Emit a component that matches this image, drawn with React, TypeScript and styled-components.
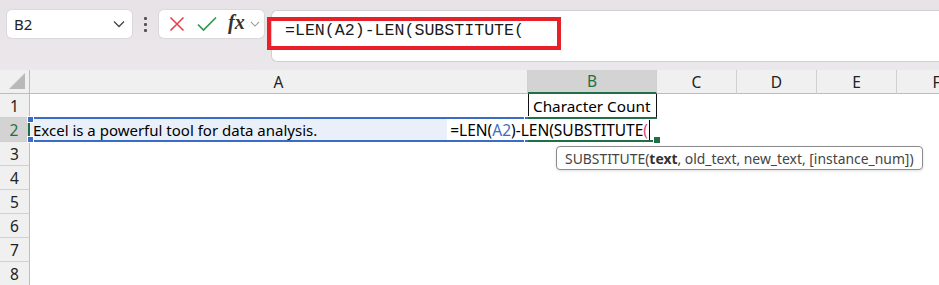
import React from 'react'
import styled, { createGlobalStyle } from 'styled-components'

const GlobalStyle = createGlobalStyle`
  html, body {
    margin: 0;
    padding: 0;
    background: #ffffff;
    overflow: hidden;
  }
  body {
    font-family: "Noto Sans", "Open Sans", sans-serif;
  }
`

const COLUMNS = ['A', 'B', 'C', 'D', 'E', 'F']
const ROWS = [1, 2, 3, 4, 5, 6, 7, 8]

export default function App () {
  return (
    <>
      <GlobalStyle />
      <StyledPage>
        <StyledTopBar>
          <StyledNameBox>
            <span>B2</span>
            <Chevron size={12} color="#444" />
          </StyledNameBox>
          <StyledGrip>
            <i /><i /><i />
          </StyledGrip>
          <StyledFxBox>
            <StyledIconButton>
              <svg width="16" height="16" viewBox="0 0 16 16">
                <path d="M1.5 1.5 L14.5 14.5 M14.5 1.5 L1.5 14.5" stroke="#e8414f" strokeWidth="1.6" fill="none" />
              </svg>
            </StyledIconButton>
            <StyledIconButton>
              <svg width="20" height="16" viewBox="0 0 20 16">
                <path d="M1 8.5 L6.5 14 L19 1.5" stroke="#2e9a4f" strokeWidth="1.7" fill="none" />
              </svg>
            </StyledIconButton>
            <StyledFx>fx</StyledFx>
            <Chevron size={10} color="#9a9a9a" />
          </StyledFxBox>
          <StyledFormulaBar>
            <StyledFormulaText>=LEN(A2)-LEN(SUBSTITUTE(</StyledFormulaText>
            <StyledHighlight />
          </StyledFormulaBar>
        </StyledTopBar>

        <StyledSheet>
          <StyledCorner>
            <svg width="18" height="18" viewBox="0 0 18 18">
              <path d="M17 1 L17 17 L1 17 Z" fill="#b9b9b9" />
            </svg>
          </StyledCorner>
          {COLUMNS.map(c => (
            <StyledColHeader key={c} $active={c === 'B'}>{c}</StyledColHeader>
          ))}
          {ROWS.map(r => (
            <React.Fragment key={r}>
              <StyledRowHeader $active={r === 2}>{r}</StyledRowHeader>
              {COLUMNS.map(c => renderCell(c, r))}
            </React.Fragment>
          ))}
        </StyledSheet>

        <StyledTooltip>
          SUBSTITUTE(<b>text</b>, old_text, new_text, [instance_num])
        </StyledTooltip>
      </StyledPage>
    </>
  )
}

function renderCell (col: string, row: number) {
  const key = col + row
  if (key === 'A2') {
    return (
      <StyledRefCell key={key}>
        Excel is a powerful tool for data analysis.
        <StyledHandle $color="#3a6cc6" $left={-3} $top={-3} />
        <StyledHandle $color="#3a6cc6" $right={-3} $top={-3} />
        <StyledHandle $color="#3a6cc6" $left={-3} $bottom={-3} />
        <StyledHandle $color="#3a6cc6" $right={-3} $bottom={-3} />
      </StyledRefCell>
    )
  }
  if (key === 'B1') {
    return <StyledBorderCell key={key}>Character Count</StyledBorderCell>
  }
  if (key === 'B2') {
    return (
      <StyledActiveCell key={key}>
        <StyledEditText>
          =LEN(<StyledRef>A2</StyledRef>)-LEN(SUBSTITUTE<StyledParen>(</StyledParen>
          <StyledCaret />
        </StyledEditText>
        <StyledHandle $color="#1f7145" $right={-4} $bottom={-4} $size={6} />
      </StyledActiveCell>
    )
  }
  return <StyledCell key={key} />
}

function Chevron ({ size, color }: { size: number, color: string }) {
  return (
    <svg width={size} height={size} viewBox="0 0 12 12">
      <path d="M1 3.5 L6 8.5 L11 3.5" stroke={color} strokeWidth="1.3" fill="none" />
    </svg>
  )
}

const StyledPage = styled.div`
  position: relative;
  width: 939px;
  height: 285px;
  overflow: hidden;
`

const StyledTopBar = styled.div`
  display: flex;
  align-items: flex-start;
  height: 70px;
  box-sizing: border-box;
  padding: 10px 0 0 7px;
  background: linear-gradient(#e6e2e6, #ebe8eb);
`

const StyledNameBox = styled.div`
  display: flex;
  align-items: center;
  justify-content: space-between;
  box-sizing: border-box;
  width: 125px;
  height: 28px;
  padding: 0 7px 0 7px;
  background: #ffffff;
  border-radius: 5px;
  box-shadow: 0 0 0 1px #dcd9dc;
  font-family: "Noto Sans", sans-serif;
  font-size: 15px;
  color: #222;
`

const StyledGrip = styled.div`
  display: flex;
  flex-direction: column;
  align-items: center;
  justify-content: center;
  gap: 3px;
  width: 27px;
  height: 28px;

  i {
    display: block;
    width: 3px;
    height: 3px;
    border-radius: 1px;
    background: #555;
  }
`

const StyledFxBox = styled.div`
  display: flex;
  align-items: center;
  box-sizing: border-box;
  width: 105px;
  height: 28px;
  padding: 0 3px 0 4px;
  gap: 2px;
  background: #ffffff;
  border-radius: 5px;
  box-shadow: 0 0 0 1px #dcd9dc;
`

const StyledIconButton = styled.span`
  display: flex;
  align-items: center;
  justify-content: center;
  width: 28px;
  height: 24px;
`

const StyledFx = styled.span`
  font-family: "Liberation Serif", serif;
  font-style: italic;
  font-weight: bold;
  font-size: 20px;
  color: #333;
  margin: -3px 3px 0 5px;
`

const StyledFormulaBar = styled.div`
  position: relative;
  flex: 1;
  height: 52px;
  margin-left: 7px;
  box-sizing: border-box;
  padding: 8px 0 0 13px;
  background: #ffffff;
  border: 1px solid #d2cfd2;
  border-right: none;
  border-radius: 6px 0 0 6px;
`

const StyledFormulaText = styled.div`
  font-family: "Liberation Mono", "DejaVu Sans Mono", monospace;
  font-size: 16.6px;
  line-height: 24px;
  color: #1a1a1a;
`

const StyledHighlight = styled.div`
  position: absolute;
  left: -5px;
  top: 6px;
  width: 294px;
  height: 33px;
  box-sizing: border-box;
  border: 4px solid #e8202a;
`

const StyledSheet = styled.div`
  display: grid;
  grid-template-columns: 30px 498px 129px 80px 80px 80px 80px;
  grid-auto-rows: 24px;
  font-family: "Noto Sans", sans-serif;
  font-size: 15px;
  color: #000;
`

const StyledCorner = styled.div`
  display: flex;
  align-items: flex-end;
  justify-content: flex-end;
  padding: 0 3px 3px 0;
  box-sizing: border-box;
  background: #f0f0f0;
  border-right: 1px solid #bdbdbd;
  border-bottom: 1px solid #bdbdbd;
`

const StyledColHeader = styled.div<{ $active?: boolean }>`
  display: flex;
  align-items: center;
  justify-content: center;
  box-sizing: border-box;
  background: ${({ $active }) => $active ? '#d3d3d3' : '#f0f0f0'};
  color: ${({ $active }) => $active ? '#1f7145' : '#222'};
  border-right: 1px solid #d0d0d0;
  border-bottom: ${({ $active }) => $active ? '2px solid #1f7145' : '1px solid #bdbdbd'};
  font-size: 15.5px;
`

const StyledRowHeader = styled.div<{ $active?: boolean }>`
  display: flex;
  align-items: center;
  justify-content: center;
  box-sizing: border-box;
  background: ${({ $active }) => $active ? '#d3d3d3' : '#f0f0f0'};
  color: ${({ $active }) => $active ? '#1f7145' : '#222'};
  border-bottom: 1px solid #d0d0d0;
  border-right: ${({ $active }) => $active ? '2px solid #1f7145' : '1px solid #bdbdbd'};
  font-size: 15.5px;
`

const StyledCell = styled.div`
  box-sizing: border-box;
  background: #ffffff;
`

const StyledBorderCell = styled(StyledCell)`
  display: flex;
  align-items: center;
  padding-left: 4px;
  border-left: 1px solid #111;
  border-right: 1px solid #111;
  white-space: nowrap;
  font-size: 15.3px;
`

const StyledRefCell = styled(StyledCell)`
  position: relative;
  display: flex;
  align-items: center;
  padding-left: 3px;
  background: #e9f0fa;
  border-top: 2px solid #3a6cc6;
  border-bottom: 2px solid #3a6cc6;
  white-space: nowrap;
  margin-top: -1px;
`

const StyledActiveCell = styled(StyledCell)`
  position: relative;
  display: flex;
  justify-content: flex-end;
  border-top: 2px solid #1f7145;
  border-bottom: 2px solid #1f7145;
  margin-top: -1px;
`

const StyledEditText = styled.div`
  display: flex;
  align-items: center;
  flex-shrink: 0;
  padding: 0 7px 0 3px;
  background: #ffffff;
  white-space: nowrap;
  font-size: 15.5px;
`

const StyledRef = styled.span`
  color: #3a6cc6;
`

const StyledParen = styled.span`
  color: #e0457b;
`

const StyledCaret = styled.span`
  display: inline-block;
  width: 1px;
  height: 20px;
  margin-left: 1px;
  background: #000;
`

const StyledHandle = styled.span<{ $color: string, $left?: number, $right?: number, $top?: number, $bottom?: number, $size?: number }>`
  position: absolute;
  width: ${({ $size }) => $size ?? 5}px;
  height: ${({ $size }) => $size ?? 5}px;
  background: ${({ $color }) => $color};
  border: 1px solid #ffffff;
  ${({ $left }) => $left !== undefined ? `left: ${$left}px;` : ''}
  ${({ $right }) => $right !== undefined ? `right: ${$right}px;` : ''}
  ${({ $top }) => $top !== undefined ? `top: ${$top}px;` : ''}
  ${({ $bottom }) => $bottom !== undefined ? `bottom: ${$bottom}px;` : ''}
`

const StyledTooltip = styled.div`
  position: absolute;
  left: 556px;
  top: 146px;
  box-sizing: border-box;
  height: 24px;
  padding: 0 8px;
  display: flex;
  align-items: center;
  background: #ffffff;
  border: 1px solid #8c8c8c;
  border-radius: 4px;
  box-shadow: 0 1px 3px rgba(0, 0, 0, 0.12);
  font-family: "Noto Sans", sans-serif;
  font-size: 13.9px;
  color: #444;
  white-space: nowrap;

  b {
    color: #333;
    font-weight: 700;
  }
`
